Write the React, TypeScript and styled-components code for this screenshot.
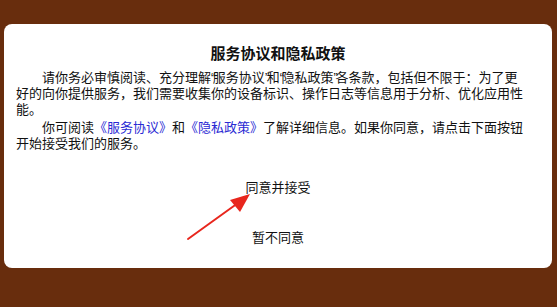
import React from "react";
import styled, { createGlobalStyle } from "styled-components";

const Global = createGlobalStyle`
  html, body { margin: 0; padding: 0; }
  body {
    width: 557px;
    height: 307px;
    background: #682d0d;
    overflow: hidden;
    font-family: "Liberation Sans", "Noto Sans CJK SC", sans-serif;
  }
`;

const Page = styled.div`
  width: 557px;
  height: 307px;
  padding: 24px 5px 0 4px;
  box-sizing: border-box;
`;

const Card = styled.div`
  position: relative;
  height: 244px;
  background: #ffffff;
  border-radius: 8px;
  display: flex;
  flex-direction: column;
  align-items: center;
`;

const Title = styled.h1`
  margin: 20px 0 0;
  font-size: 15px;
  font-weight: bold;
  color: #111;
  line-height: 20px;
`;

const Body = styled.div`
  margin-top: 6px;
  align-self: stretch;
  padding: 0 2px 0 12px;
  font-size: 13px;
  line-height: 16px;
  color: #111;
`;

const Para = styled.p`
  margin: 0 0 2px;
  text-indent: 26px;
`;

const Quote = styled.span`
  letter-spacing: -2.5px;
`;

const Link = styled.span`
  color: #2a2ad4;
`;

const Actions = styled.div`
  margin-top: 25px;
  display: flex;
  flex-direction: column;
  align-items: center;
  gap: 32px;
`;

const Action = styled.button`
  border: 0;
  background: none;
  padding: 0;
  font-family: inherit;
  font-size: 13px;
  line-height: 18px;
  color: #111;
`;

const Arrow = styled.svg`
  position: absolute;
  left: 180px;
  top: 163px;
  pointer-events: none;
`;

export default function App() {
  return (
    <>
      <Global />
      <Page>
        <Card>
          <Title>服务协议和隐私政策</Title>
          <Body>
            <Para>
              请你务必审慎阅读、充分理解<Quote>“</Quote>服务协议<Quote>”</Quote>和<Quote>“</Quote>隐私政策<Quote>”</Quote>各条款，包括但不限于：为了更
              <br />
              好的向你提供服务，我们需要收集你的设备标识、操作日志等信息用于分析、优化应用性
              <br />
              能。
            </Para>
            <Para>
              你可阅读<Link>《服务协议》</Link>和<Link>《隐私政策》</Link>了解详细信息。如果你同意，请点击下面按钮
              <br />
              开始接受我们的服务。
            </Para>
          </Body>
          <Actions>
            <Action>同意并接受</Action>
            <Action>暂不同意</Action>
          </Actions>
          <Arrow width="72" height="60" viewBox="0 0 72 60">
            <path d="M4 52 L54 16" stroke="#e8261d" strokeWidth="2" strokeLinecap="round" />
            <polygon points="66,7 46,13 56,25" fill="#e8261d" />
          </Arrow>
        </Card>
      </Page>
    </>
  );
}
